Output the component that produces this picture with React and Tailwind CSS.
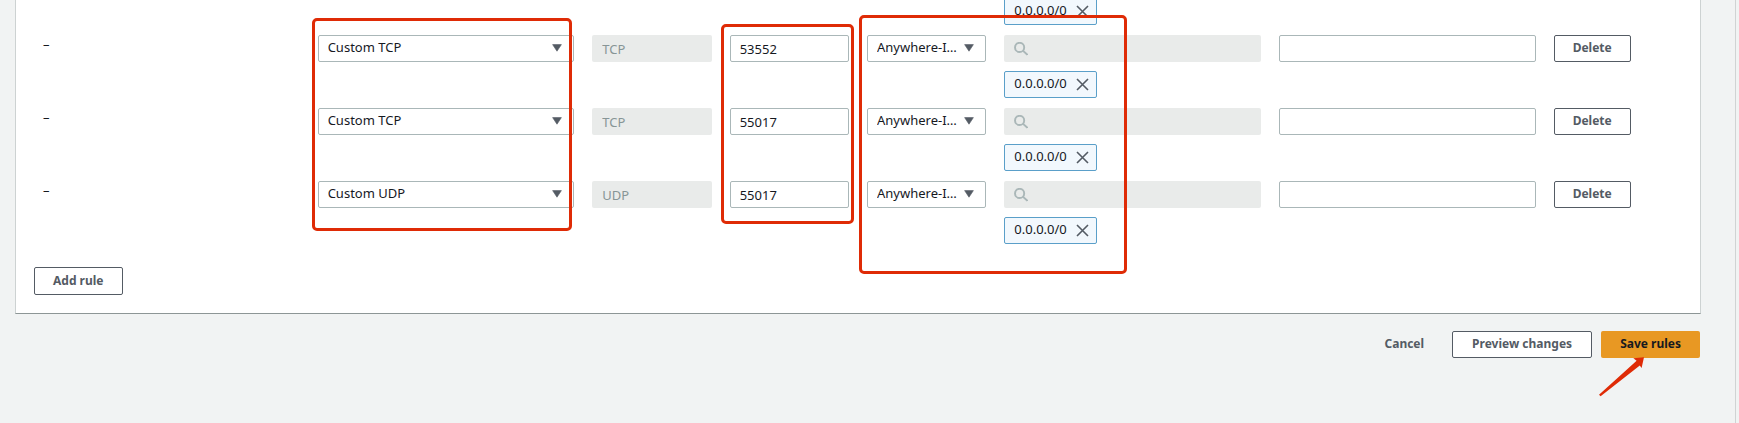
import { useState } from "react";

const rules = [
  { id: 1, type: "Custom TCP", protocol: "TCP", port: "53552" },
  { id: 2, type: "Custom TCP", protocol: "TCP", port: "55017" },
  { id: 3, type: "Custom UDP", protocol: "UDP", port: "55017" },
];

const fieldBox =
  "block h-[27px] w-full min-w-0 rounded-[2px] border border-[#aab7b8] bg-white px-[9px] text-[13px] text-[#16191f] outline-none";
const disabledBox =
  "block h-[27px] w-full min-w-0 rounded-[2px] bg-[#e9ebea] px-[10px] text-[13px] text-[#879596] outline-none";
const outlineButton =
  "block rounded-[2px] border border-[#545b64] bg-white pb-[2px] text-[12px] leading-[23px] font-bold whitespace-nowrap text-[#545b64]";

function Select({ label, value, options }) {
  const [current, setCurrent] = useState(value);
  return (
    <div className="relative">
      <select
        aria-label={label}
        value={current}
        onChange={(e) => setCurrent(e.target.value)}
        className="block h-[27px] w-full appearance-none rounded-[2px] border border-[#aab7b8] bg-white pr-[28px] pb-[2px] pl-[9px] text-[13px] text-ellipsis text-[#16191f] outline-none"
      >
        {options.map((o) => (
          <option key={o}>{o}</option>
        ))}
      </select>
      <svg
        viewBox="0 0 10 8"
        className="pointer-events-none absolute top-[9px] right-3 h-2 w-[10px] fill-[#545b64]"
        aria-hidden="true"
      >
        <path d="M.6.6h8.8L5 7.2z" stroke="#545b64" strokeWidth=".6" strokeLinejoin="round" />
      </svg>
    </div>
  );
}

function Token({ children }) {
  return (
    <span className="flex h-[27px] w-[93px] items-center justify-between rounded-[2px] border border-[#5a9fc9] bg-[#f2f8fd] pr-[7px] pl-[9px] text-[13px] text-[#16191f]">
      <span className="pb-[2px]">{children}</span>
      <button type="button" aria-label={`Remove ${children}`}>
        <svg viewBox="0 0 13 13" className="h-[13px] w-[13px]" aria-hidden="true">
          <path d="M1 1l11 11M12 1L1 12" fill="none" stroke="#545b64" strokeWidth="1.6" />
        </svg>
      </button>
    </span>
  );
}

function RuleRow({ rule }) {
  return (
    <div className="grid grid-cols-12 gap-x-[18px] pb-[10px]">
      <div className="col-span-2 text-[13px] leading-[18px] text-[#16191f]">–</div>
      <div className="col-span-2">
        <Select label="Type" value={rule.type} options={["Custom TCP", "Custom UDP"]} />
      </div>
      <input aria-label="Protocol" className={disabledBox} value={rule.protocol} disabled />
      <input aria-label="Port range" className={fieldBox} defaultValue={rule.port} />
      <Select label="Source type" value="Anywhere-I…" options={["Anywhere-I…"]} />
      <div className="col-span-2 flex flex-col gap-[9px]">
        <div className="relative">
          <input aria-label="Source" className={disabledBox} disabled />
          <svg
            viewBox="0 0 14 14"
            className="pointer-events-none absolute top-[7px] left-[10px] h-[14px] w-[14px]"
            aria-hidden="true"
          >
            <g fill="none" stroke="#aab7b8" strokeWidth="1.9">
              <circle cx="5.6" cy="5.4" r="4.6" />
              <path d="M8.8 8.6l4.6 4.2" />
            </g>
          </svg>
        </div>
        <Token>0.0.0.0/0</Token>
      </div>
      <input aria-label="Description" className={`${fieldBox} col-span-2`} />
      <div>
        <button type="button" className={`${outlineButton} px-[18px]`}>Delete</button>
      </div>
    </div>
  );
}

export default function App() {
  return (
    <div className="flex min-h-screen overflow-hidden bg-[#f1f3f3] font-['Noto_Sans',sans-serif]">
      <main className="flex-1 border-r border-[#d0d3d3] pr-[34px] pl-[15px]">
        <section className="relative border-x border-b border-x-[#cdd2d2] border-b-[#8d9696] bg-white px-[18px] pb-[18px]">
          <div className="-mt-[2px] px-[9px]">
            <div className="grid grid-cols-12 gap-x-[18px] pb-[10px]">
              <div className="col-span-2 col-start-8">
                <Token>0.0.0.0/0</Token>
              </div>
            </div>
            {rules.map((r) => (
              <RuleRow key={r.id} rule={r} />
            ))}
          </div>
          <button type="button" className={`${outlineButton} mt-[13px] h-7 px-[18px]`}>Add rule</button>

          <div className="pointer-events-none absolute inset-x-[27px] top-0 grid grid-cols-12 items-start gap-x-[18px]">
            <div className="col-span-2 col-start-3 mt-5 mr-[2px] -ml-[6px] h-[213px] rounded-[5px] border-[3px] border-[#df2b06]" />
            <div className="col-start-6 mt-[26px] -mr-[5px] -ml-[9px] h-[200px] rounded-[5px] border-[3px] border-[#df2b06]" />
            <div className="col-span-2 col-start-7 mt-[17px] -mr-[3px] -ml-[8px] h-[259px] rounded-[5px] border-[3px] border-[#df2b06]" />
          </div>
        </section>

        <footer className="mt-[17px] flex items-start justify-end gap-[9px] pr-px">
          <button
            type="button"
            className="px-[19px] pb-[2px] text-[12px] leading-[25px] font-bold text-[#545b64]"
          >
            Cancel
          </button>
          <button type="button" className={`${outlineButton} px-[19px]`}>Preview changes</button>
          <div className="relative">
            <button
              type="button"
              className="block rounded-[2px] bg-[#e89823] px-[19px] pb-[2px] text-[12px] leading-[25px] font-bold text-[#16191f]"
            >
              Save rules
            </button>
            <svg
              viewBox="0 0 46 40"
              className="pointer-events-none absolute top-[26px] -left-[2px] h-10 w-[46px]"
              aria-hidden="true"
            >
              <path
                d="M45 .3L34.3 1.3 37.6 3.8 0 37.7l1.6 1.5L40.8 8.4l1.8 2.6z"
                fill="#df2b06"
              />
            </svg>
          </div>
        </footer>
      </main>
      <div className="w-[3px]" />
    </div>
  );
}
